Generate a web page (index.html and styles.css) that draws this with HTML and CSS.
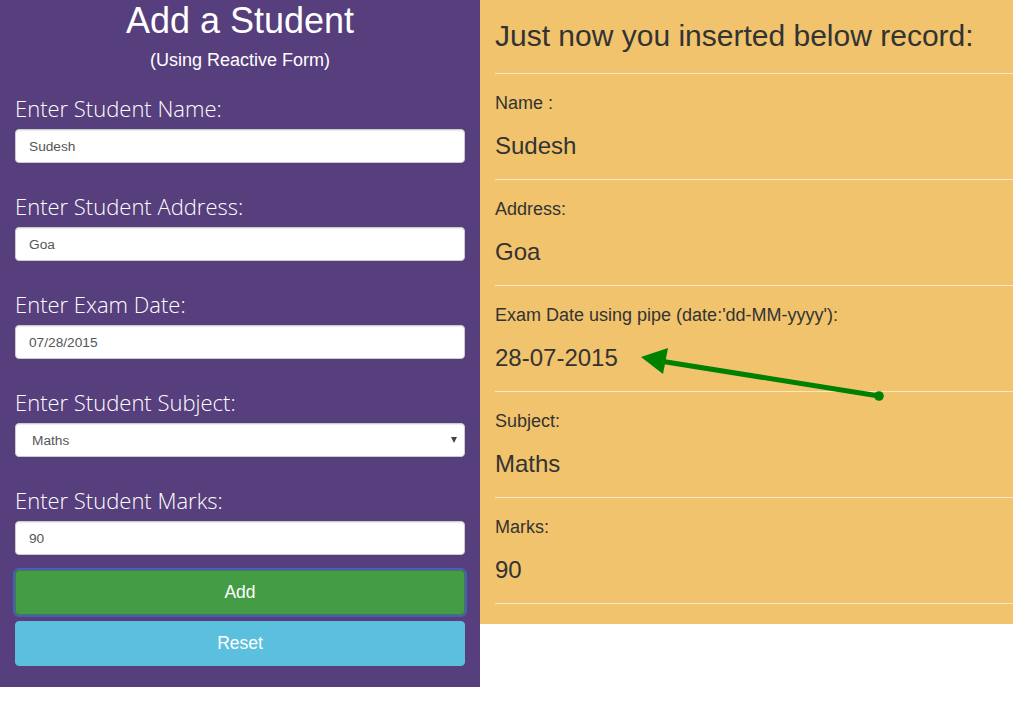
FILE: index.html
```html
<!DOCTYPE html>
<html>
<head>
<meta charset="utf-8">
<title>Add a Student</title>
<link rel="stylesheet" href="styles.css">
</head>
<body>
<div class="page">
  <div class="form-panel">
    <h1 class="title">Add a Student</h1>
    <h4 class="subtitle">(Using Reactive Form)</h4>
    <div class="form-group">
      <label class="label">Enter Student Name:</label>
      <input class="control" type="text" value="Sudesh">
    </div>
    <div class="form-group">
      <label class="label">Enter Student Address:</label>
      <input class="control" type="text" value="Goa">
    </div>
    <div class="form-group">
      <label class="label">Enter Exam Date:</label>
      <input class="control" type="text" value="07/28/2015">
    </div>
    <div class="form-group">
      <label class="label">Enter Student Subject:</label>
      <div class="select-wrap">
        <select class="control select"><option>Maths</option></select>
      </div>
    </div>
    <div class="form-group">
      <label class="label">Enter Student Marks:</label>
      <input class="control" type="text" value="90">
    </div>
    <div class="buttons">
      <button class="btn btn-add">Add</button>
      <button class="btn btn-reset">Reset</button>
    </div>
  </div>
  <div class="record-panel">
    <h3 class="record-title">Just now you inserted below record:</h3>
    <div class="row">
      <div class="row-label">Name :</div>
      <div class="row-value">Sudesh</div>
    </div>
    <div class="row">
      <div class="row-label">Address:</div>
      <div class="row-value">Goa</div>
    </div>
    <div class="row">
      <div class="row-label">Exam Date using pipe (date:'dd-MM-yyyy'):</div>
      <div class="row-value">28-07-2015</div>
    </div>
    <div class="row">
      <div class="row-label">Subject:</div>
      <div class="row-value">Maths</div>
    </div>
    <div class="row">
      <div class="row-label">Marks:</div>
      <div class="row-value">90</div>
    </div>
  </div>
</div>
<svg class="annotation" width="1013" height="704" viewBox="0 0 1013 704">
  <line x1="879" y1="396" x2="660" y2="361" stroke="#008000" stroke-width="5" stroke-linecap="round"/>
  <circle cx="879" cy="396" r="4.8" fill="#008000"/>
  <polygon points="641,357 668,348 663,374" fill="#008000"/>
</svg>
</body>
</html>
```

FILE: styles.css
```css
html, body {
  margin: 0;
  padding: 0;
  background: #ffffff;
}

body {
  font-family: "Liberation Sans", Arial, sans-serif;
  position: relative;
}

.page {
  display: flex;
  align-items: flex-start;
  width: 1013px;
}

.form-panel {
  width: 480px;
  box-sizing: border-box;
  background: #573e7c;
  padding: 0 15px 21px 15px;
  color: #ffffff;
}

.title {
  margin: 0;
  font-size: 36px;
  line-height: 42px;
  font-weight: normal;
  text-align: center;
}

.subtitle {
  margin: 6px 0 0 0;
  font-size: 18px;
  line-height: 24px;
  font-weight: normal;
  text-align: center;
}

.form-group {
  display: flex;
  flex-direction: column;
  margin-top: 28px;
}

.form-group:first-of-type {
  margin-top: 21px;
}

.label {
  font-family: "Open Sans", sans-serif;
  font-weight: 300;
  font-size: 22px;
  line-height: 30px;
  height: 30px;
  margin-bottom: 6px;
  color: #ffffff;
}

.control {
  box-sizing: border-box;
  width: 100%;
  height: 34px;
  margin: 0;
  padding: 0 12px 0 13px;
  border: 1px solid #cccccc;
  border-radius: 4px;
  background: #ffffff;
  box-shadow: inset 0 1px 1px rgba(0, 0, 0, 0.075);
  font-family: "Liberation Sans", Arial, sans-serif;
  font-size: 13.7px;
  color: #555555;
  outline: none;
}

.select-wrap {
  position: relative;
}

.select {
  appearance: none;
  -webkit-appearance: none;
  padding-left: 16px;
}

.select-wrap::after {
  content: "";
  position: absolute;
  right: 8px;
  top: 14px;
  border-left: 3.5px solid transparent;
  border-right: 3.5px solid transparent;
  border-top: 6px solid #444444;
}

.buttons {
  display: flex;
  flex-direction: column;
  gap: 6px;
  margin-top: 15px;
}

.btn {
  box-sizing: border-box;
  width: 100%;
  height: 45px;
  margin: 0;
  border-radius: 4px;
  font-family: "Liberation Sans", Arial, sans-serif;
  font-size: 17.5px;
  color: #ffffff;
  cursor: pointer;
}

.btn-add {
  background: #449d44;
  border: 1px solid #398439;
  outline: 2px solid #4a5cc4;
  outline-offset: 0;
}

.btn-reset {
  background: #5bc0de;
  border: 1px solid #5bc0de;
}

.record-panel {
  flex: 1;
  background: #f0c36c;
  padding: 16px 0 20px 15px;
  color: #333333;
  overflow: hidden;
}

.record-title {
  margin: 0 0 17px 0;
  font-size: 30px;
  line-height: 40px;
  font-weight: normal;
  white-space: nowrap;
}

.row {
  border-top: 1px solid #f6e8c8;
  padding: 18px 0;
}

.row:last-child {
  border-bottom: 1px solid #f6e8c8;
}

.row-label {
  font-size: 18px;
  line-height: 22px;
}

.row-value {
  margin-top: 17px;
  font-size: 24px;
  line-height: 30px;
}

.annotation {
  position: absolute;
  left: 0;
  top: 0;
  pointer-events: none;
}
```
